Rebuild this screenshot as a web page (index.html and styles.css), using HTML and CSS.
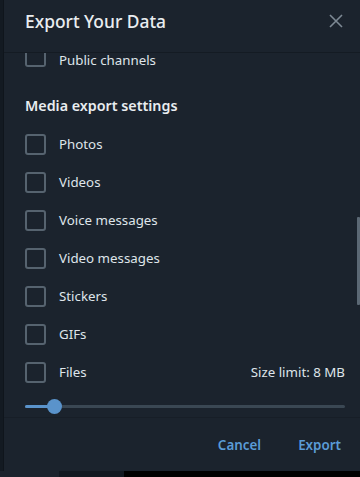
FILE: index.html
```html
<!DOCTYPE html>
<html lang="en">
<head>
  <meta charset="UTF-8" />
  <meta name="viewport" content="width=device-width, initial-scale=1" />
  <title>Export Your Data</title>
  <link rel="stylesheet" href="styles.css">
</head>
<body>

<div class="screen">
  <div class="edge"></div>

  <div class="dialog">
    <header class="dialog-head">
      <h1>Export Your Data</h1>
      <button class="close" aria-label="Close">
        <svg width="14" height="14" viewBox="0 0 14 14">
          <path d="M1 1 L13 13 M13 1 L1 13" stroke="#7d8994" stroke-width="1.6" fill="none"/>
        </svg>
      </button>
    </header>

    <div class="body">
      <div class="scroll">
        <label class="row cut">
          <span class="box"></span>
          <span class="label">Public channels</span>
        </label>

        <h2>Media export settings</h2>

        <label class="row"><span class="box"></span><span class="label">Photos</span></label>
        <label class="row"><span class="box"></span><span class="label">Videos</span></label>
        <label class="row"><span class="box"></span><span class="label">Voice messages</span></label>
        <label class="row"><span class="box"></span><span class="label">Video messages</span></label>
        <label class="row"><span class="box"></span><span class="label">Stickers</span></label>
        <label class="row"><span class="box"></span><span class="label">GIFs</span></label>
        <label class="row">
          <span class="box"></span>
          <span class="label">Files</span>
          <span class="limit">Size limit: 8 MB</span>
        </label>

        <div class="slider">
          <div class="fill"></div>
          <div class="knob"></div>
        </div>
      </div>
      <div class="scrollbar"><div class="thumb"></div></div>
    </div>

    <footer class="dialog-foot">
      <button class="btn">Cancel</button>
      <button class="btn">Export</button>
    </footer>
  </div>
</div>

<div class="bottom-strip">
  <div class="strip-a"></div>
  <div class="strip-b"></div>
</div>

</body>
</html>
```

FILE: styles.css
```css
body {
  margin: 0;
  background: #000;
  font-family: 'Noto Sans', 'Open Sans', sans-serif;
  color: #e4e9ed;
  width: 360px;
  height: 477px;
  overflow: hidden;
}

.screen {
  display: flex;
  height: 471px;
}

.edge {
  width: 3px;
  background: #131a22;
  border-right: 1px solid #0f151c;
}

.dialog {
  flex: 1;
  display: flex;
  flex-direction: column;
  background: #1b232d;
}

.dialog-head {
  display: flex;
  align-items: center;
  justify-content: space-between;
  height: 53px;
  padding: 0 16px 10px 21px;
  box-sizing: border-box;
  border-bottom: 1px solid #141b23;
  flex: none;
}

.dialog-head h1 {
  margin: 0;
  font-size: 17.4px;
  font-weight: 500;
  color: #e9edf0;
}

.close {
  background: none;
  border: none;
  padding: 0;
  width: 16px;
  height: 16px;
  display: flex;
  align-items: center;
  justify-content: center;
}

.body {
  flex: 1;
  display: flex;
}

.scroll {
  flex: 1;
  padding: 0 12px 0 21px;
}

.row {
  display: flex;
  align-items: center;
  height: 38px;
  font-size: 13.3px;
  color: #dfe5ea;
}

.row.cut {
  height: 14px;
  line-height: 14px;
  align-items: flex-end;
}

.box {
  width: 17px;
  height: 17px;
  border: 2px solid #56636f;
  border-radius: 3px;
  margin-right: 13px;
  flex: none;
}

/* top of this box sits under the header */
.row.cut .box {
  height: 12px;
  border-top: 0;
  border-radius: 0 0 3px 3px;
}

.label {
  flex: 1;
}

.limit {
  color: #dfe5ea;
}

h2 {
  margin: 0;
  padding-top: 20px;
  height: 38px;
  line-height: 38px;
  font-size: 14.3px;
  font-weight: 600;
  color: #e9edf0;
}

.slider {
  position: relative;
  height: 3px;
  margin-top: 14px;
  background: #3a4753;
  border-radius: 2px;
}

.fill {
  width: 29px;
  height: 3px;
  background: #5a93cb;
  border-radius: 2px;
}

.knob {
  position: absolute;
  left: 22px;
  top: -6px;
  width: 15px;
  height: 15px;
  border-radius: 50%;
  background: #5a93cb;
}

.scrollbar {
  width: 3px;
  padding: 4px 0 20px;
}

.thumb {
  margin-top: 160px;
  height: 88px;
  background: #5b6874;
  border-radius: 1px;
}

.dialog-foot {
  height: 54px;
  box-sizing: border-box;
  display: flex;
  justify-content: flex-end;
  align-items: center;
  gap: 37px;
  padding: 0 19px 0;
  border-top: 1px solid #171e27;
  flex: none;
}

.btn {
  background: none;
  border: none;
  padding: 0;
  font-family: inherit;
  font-size: 13.4px;
  font-weight: 600;
  color: #5a9bd6;
}

.bottom-strip {
  display: flex;
  height: 6px;
}

.strip-a {
  width: 59px;
  background: #1b232d;
}

.strip-b {
  width: 65px;
  background: #121921;
}
```
